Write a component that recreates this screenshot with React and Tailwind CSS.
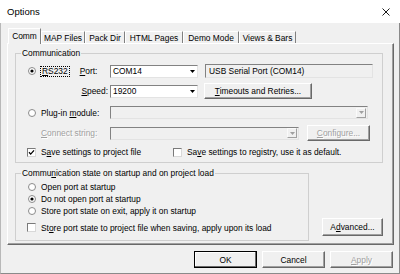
import React from "react";

function Radio({ checked }) {
  return (
    <svg width="8" height="8" viewBox="0 0 8 8" className="shrink-0">
      <circle cx="4" cy="4" r="3.5" fill="#fff" stroke="#8a8a8a" strokeWidth="1" />
      {checked && <circle cx="4" cy="4" r="1.6" fill="#000" />}
    </svg>
  );
}

function Check({ checked }) {
  return (
    <div className="w-[9px] h-[9px] shrink-0 bg-white border border-t-[#7a7a7a] border-l-[#7a7a7a] border-r-[#d8d8d8] border-b-[#d8d8d8] flex items-center justify-center">
      {checked && (
        <svg width="7" height="7" viewBox="0 0 7 7">
          <path d="M1 3.3 L2.7 5.1 L6 1.4" stroke="#000" strokeWidth="1.3" fill="none" />
        </svg>
      )}
    </div>
  );
}

function Tri({ color }) {
  return (
    <svg width="5" height="3" viewBox="0 0 5 3">
      <path d="M0 0 H5 L2.5 3 Z" fill={color} />
    </svg>
  );
}

function Combo({ className, value, disabled }) {
  return (
    <div
      className={
        "flex items-center border border-t-[#828282] border-l-[#828282] border-r-[#e3e3e3] border-b-[#e3e3e3] " +
        (disabled ? "bg-[#f0f0f0] " : "bg-white ") +
        className
      }
    >
      <div className="flex-1 pl-[2px] whitespace-nowrap overflow-hidden">{value}</div>
      {disabled ? (
        <div className="w-[10px] h-[10px] mr-[1px] flex items-center justify-center border border-t-[#fafafa] border-l-[#fafafa] border-r-[#a0a0a0] border-b-[#a0a0a0]">
          <Tri color="#a0a0a0" />
        </div>
      ) : (
        <div className="w-[10px] h-full flex items-center justify-center">
          <Tri color="#000" />
        </div>
      )}
    </div>
  );
}

function Btn({ className, children, disabled, def }) {
  return (
    <div
      className={
        "flex items-center justify-center whitespace-nowrap border " +
        (def
          ? "border-black shadow-[inset_-1px_-1px_0_#696969,inset_1px_1px_0_#fff] "
          : "border-t-white border-l-white border-r-[#696969] border-b-[#696969] shadow-[inset_-1px_-1px_0_#a0a0a0] ") +
        (disabled ? "text-[#a0a0a0] [text-shadow:1px_1px_0_#fff] " : "") +
        className
      }
    >
      {children}
    </div>
  );
}

function Tab({ className, children, selected }) {
  return (
    <div
      className={
        "flex items-center justify-center whitespace-nowrap border-l border-t border-r border-l-white border-t-white border-r-[#808080] " +
        (selected ? "h-[16px] -mb-[1px] relative z-10 bg-[#f0f0f0] pb-[2px] " : "h-[12px] ") +
        className
      }
    >
      {children}
    </div>
  );
}

export default function App() {
  return (
    <div className="w-[400px] h-[274px] bg-[#f0f0f0] flex flex-col font-['Liberation_Sans',Arial,sans-serif] text-[8.4px] leading-[10px] text-black overflow-hidden">
      {/* Title bar */}
      <div className="h-[23px] shrink-0 bg-white flex items-center justify-between pl-[7px] pr-[10px]">
        <span className="text-[9.5px] leading-[12px]">Options</span>
        <svg width="8" height="8" viewBox="0 0 8 8">
          <path d="M0.5 0.5L7.5 7.5M7.5 0.5L0.5 7.5" stroke="#000" strokeWidth="0.9" />
        </svg>
      </div>

      {/* Body */}
      <div className="flex-1 flex flex-col border-l border-r border-b border-l-[#b8b8b8] border-r-[#8a8a8a] border-b-[#8a8a8a]">
        {/* Tabs */}
        <div className="h-[20px] shrink-0 flex items-end pl-[7px]">
          <Tab selected className="w-[33px]">Comm</Tab>
          <Tab className="w-[44px]">MAP Files</Tab>
          <Tab className="w-[40px]">Pack Dir</Tab>
          <Tab className="w-[58px]">HTML Pages</Tab>
          <Tab className="w-[56px]">Demo Mode</Tab>
          <Tab className="w-[57px]">Views &amp; Bars</Tab>
        </div>

        {/* Panel */}
        <div className="ml-[6px] w-[387px] h-[202px] shrink-0 flex flex-col pl-[7px] pt-[4px] border border-t-white border-l-white border-r-[#696969] border-b-[#696969] shadow-[inset_-1px_-1px_0_#a0a0a0]">
          {/* Group 1 */}
          <fieldset className="w-[368px] min-w-0 m-0 p-0 pb-[5px] border border-[#cfcfcf]">
            <legend className="ml-[5px] px-[1px] leading-[10px]">Communication</legend>

            {/* Row 1 */}
            <div className="flex items-center h-[14px] mt-[6px]">
              <div className="ml-[12px] flex items-center">
                <Radio checked />
              </div>
              <div className="w-[74px] flex items-center">
                <div className="ml-[4px] h-[11px] px-[1px] border border-dotted border-black flex items-center">
                  <span><u>R</u>S232</span>
                </div>
                <div className="ml-[10px]">
                  <u>P</u>ort:
                </div>
              </div>
              <Combo className="w-[88px] h-[13px]" value="COM14" />
              <div className="ml-[7px] w-[168px] h-[14px] flex items-center pl-[3px] border border-t-[#828282] border-l-[#828282] border-r-[#e3e3e3] border-b-[#e3e3e3] bg-[#f0f0f0] whitespace-nowrap">
                USB Serial Port (COM14)
              </div>
            </div>

            {/* Row 2 */}
            <div className="flex items-center h-[16px] mt-[5px]">
              <div className="w-[94px] text-right pr-[2px]">
                <u>S</u>peed:
              </div>
              <Combo className="w-[88px] h-[13px]" value="19200" />
              <Btn className="ml-[6px] w-[108px] h-[16px]">
                <span><u>T</u>imeouts and Retries...</span>
              </Btn>
            </div>

            {/* Row 3 */}
            <div className="flex items-center h-[13px] mt-[7px]">
              <div className="ml-[12px] flex items-center">
                <Radio />
              </div>
              <div className="ml-[5px] w-[69px] whitespace-nowrap">
                Plug-in <u>m</u>odule:
              </div>
              <Combo className="w-[258px] h-[13px]" value="" disabled />
            </div>

            {/* Row 4 */}
            <div className="flex items-center h-[16px] mt-[6px]">
              <div className="ml-[25px] w-[69px] whitespace-nowrap text-[#a0a0a0] [text-shadow:1px_1px_0_#fff]">
                <u>C</u>onnect string:
              </div>
              <Combo className="w-[189px] h-[13px]" value="" disabled />
              <Btn disabled className="ml-[8px] w-[63px] h-[16px]">
                <span><u>C</u>onfigure...</span>
              </Btn>
            </div>

            {/* Row 5 */}
            <div className="flex items-center h-[10px] mt-[6px]">
              <div className="ml-[11px]">
                <Check checked />
              </div>
              <div className="ml-[5px] w-[132px] whitespace-nowrap">
                S<u>a</u>ve settings to project file
              </div>
              <Check />
              <div className="ml-[5px] whitespace-nowrap">
                Sa<u>v</u>e settings to registry, use it as default.
              </div>
            </div>
          </fieldset>

          {/* Group 2 + Advanced */}
          <div className="flex items-end mt-[5px]">
            <fieldset className="w-[294px] min-w-0 m-0 p-0 pb-[7px] border border-[#cfcfcf]">
              <legend className="ml-[5px] px-[1px] leading-[10px] whitespace-nowrap">
                Commu<u>n</u>ication state on startup and on project load
              </legend>
              <div className="flex items-center h-[12px] mt-[3px]">
                <div className="ml-[12px] flex items-center">
                  <Radio />
                </div>
                <div className="ml-[5px] whitespace-nowrap">Open port at startup</div>
              </div>
              <div className="flex items-center h-[12px]">
                <div className="ml-[12px] flex items-center">
                  <Radio checked />
                </div>
                <div className="ml-[5px] whitespace-nowrap">Do not open port at startup</div>
              </div>
              <div className="flex items-center h-[12px]">
                <div className="ml-[12px] flex items-center">
                  <Radio />
                </div>
                <div className="ml-[5px] whitespace-nowrap">Store port state on exit, apply it on startup</div>
              </div>
              <div className="flex items-center h-[11px] mt-[5px]">
                <div className="ml-[11px]">
                  <Check />
                </div>
                <div className="ml-[5px] whitespace-nowrap">
                  St<u>o</u>re port state to project file when saving, apply upon its load
                </div>
              </div>
            </fieldset>
            <Btn className="ml-[13px] mb-[5px] w-[61px] h-[18px]">
              <span>A<u>d</u>vanced...</span>
            </Btn>
          </div>
        </div>

        {/* Bottom buttons */}
        <div className="flex justify-end gap-[5px] pr-[6px] mt-[6px]">
          <Btn def className="w-[63px] h-[17px]">OK</Btn>
          <Btn className="w-[63px] h-[17px]">Cancel</Btn>
          <Btn disabled className="w-[63px] h-[17px]">
            <span><u>A</u>pply</span>
          </Btn>
        </div>
      </div>
    </div>
  );
}
